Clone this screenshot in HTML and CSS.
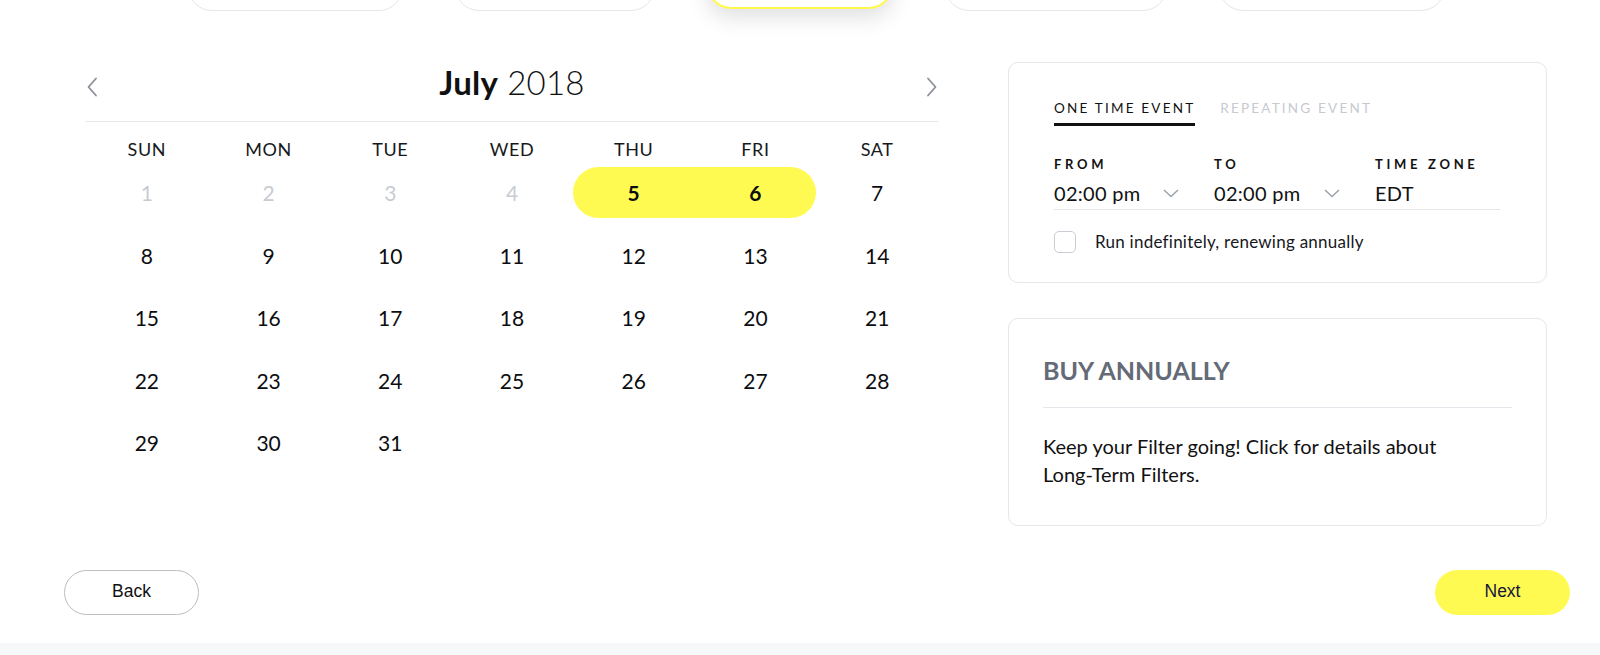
FILE: index.html
```html
<!DOCTYPE html>
<html lang="en">
<head>
<meta charset="utf-8">
<title>Schedule</title>
<link rel="stylesheet" href="styles.css">
</head>
<body>
<div class="page">
  <nav class="steps">
    <div class="step s1"></div>
    <div class="step s2"></div>
    <div class="step s3 active"></div>
    <div class="step s4"></div>
    <div class="step s5"></div>
  </nav>

  <main class="main">
    <section class="calendar">
      <header class="cal-head">
        <button class="nav-btn" aria-label="Previous month">
          <svg width="12" height="20" viewBox="0 0 12 20"><polyline points="10,1.5 2.5,10 10,18.5" fill="none" stroke="#8c9198" stroke-width="1.8" stroke-linecap="round" stroke-linejoin="round"/></svg>
        </button>
        <h2 class="cal-title"><b>July</b> 2018</h2>
        <button class="nav-btn" aria-label="Next month">
          <svg width="12" height="20" viewBox="0 0 12 20"><polyline points="2,1.5 9.5,10 2,18.5" fill="none" stroke="#8c9198" stroke-width="1.8" stroke-linecap="round" stroke-linejoin="round"/></svg>
        </button>
      </header>
      <div class="weekdays">
        <span>SUN</span><span>MON</span><span>TUE</span><span>WED</span><span>THU</span><span>FRI</span><span>SAT</span>
      </div>
      <div class="days">
        <span class="day past">1</span><span class="day past">2</span><span class="day past">3</span><span class="day past">4</span><span class="day sel start">5</span><span class="day sel end">6</span><span class="day">7</span>
        <span class="day">8</span><span class="day">9</span><span class="day">10</span><span class="day">11</span><span class="day">12</span><span class="day">13</span><span class="day">14</span>
        <span class="day">15</span><span class="day">16</span><span class="day">17</span><span class="day">18</span><span class="day">19</span><span class="day">20</span><span class="day">21</span>
        <span class="day">22</span><span class="day">23</span><span class="day">24</span><span class="day">25</span><span class="day">26</span><span class="day">27</span><span class="day">28</span>
        <span class="day">29</span><span class="day">30</span><span class="day">31</span>
      </div>
    </section>

    <aside class="side">
      <div class="card event-card">
        <div class="event-tabs">
          <span class="etab on">ONE TIME EVENT</span>
          <span class="etab">REPEATING EVENT</span>
        </div>
        <div class="fields">
          <div class="field">
            <label class="flabel">FROM</label>
            <div class="fvalue select"><span>02:00 pm</span>
              <svg width="16" height="9" viewBox="0 0 16 9"><polyline points="1,1 8,7.5 15,1" fill="none" stroke="#9aa0a8" stroke-width="1.4"/></svg>
            </div>
          </div>
          <div class="field">
            <label class="flabel">TO</label>
            <div class="fvalue select"><span>02:00 pm</span>
              <svg width="16" height="9" viewBox="0 0 16 9"><polyline points="1,1 8,7.5 15,1" fill="none" stroke="#9aa0a8" stroke-width="1.4"/></svg>
            </div>
          </div>
          <div class="field">
            <label class="flabel">TIME ZONE</label>
            <div class="fvalue">EDT</div>
          </div>
        </div>
        <label class="check">
          <span class="box"></span>
          <span class="check-text">Run indefinitely, renewing annually</span>
        </label>
      </div>

      <div class="card promo-card">
        <h3 class="promo-title">BUY ANNUALLY</h3>
        <p class="promo-text">Keep your Filter going! Click for details about <span class="nowrap">Long-Term</span> Filters.</p>
      </div>
    </aside>
  </main>

  <div class="actions">
    <button class="btn back">Back</button>
    <button class="btn next">Next</button>
  </div>
</div>
<footer class="foot"></footer>
</body>
</html>
```

FILE: styles.css
```css
* { box-sizing: border-box; }

html, body {
  margin: 0;
  padding: 0;
  background: #fff;
  font-family: "Lato", "Open Sans", sans-serif;
  color: #111318;
  overflow: hidden;
}

.page {
  height: 643px;
  display: flex;
  flex-direction: column;
}

/* top step tabs (cut off above viewport) */
.steps {
  display: flex;
  gap: 52px;
  padding-left: 188px;
  height: 11px;
}
.step {
  height: 50px;
  margin-top: -39px;
  border: 1px solid #e6e6e8;
  border-radius: 24px;
  background: #fff;
  flex: none;
}
.s1 { width: 215px; }
.s2 { width: 200px; }
.s3 { width: 186px; }
.s4 { width: 222px; }
.s5 { width: 226px; }
.step.active {
  border: 2px solid #fff94f;
  margin-top: -41px;
  box-shadow: 0 8px 22px rgba(0, 0, 0, 0.13);
}

.main {
  display: flex;
  padding: 51px 53px 0 86px;
  gap: 70px;
}

/* calendar */
.calendar {
  width: 852px;
  flex: none;
}
.cal-head {
  display: flex;
  align-items: center;
  justify-content: space-between;
  border-bottom: 1px solid #e3e6ea;
  padding-bottom: 19px;
}
.nav-btn {
  border: 0;
  background: none;
  padding: 0;
  width: 12px;
  height: 20px;
  margin-top: 10px;
  display: flex;
  cursor: pointer;
}
.cal-title {
  margin: 0;
  font-size: 33px;
  line-height: 40px;
  font-weight: 300;
  color: #111;
  letter-spacing: 0.2px;
}
.cal-title b { font-weight: 700; }

.weekdays {
  display: grid;
  grid-template-columns: repeat(7, 1fr);
  margin-top: 15px;
  text-align: center;
  font-size: 18px;
  line-height: 24px;
  letter-spacing: 0.6px;
  color: #16181c;
}
.days {
  display: grid;
  grid-template-columns: repeat(7, 1fr);
  grid-auto-rows: 51px;
  row-gap: 11.5px;
  margin-top: 6px;
}
.day {
  display: flex;
  align-items: center;
  justify-content: center;
  font-size: 21px;
  color: #0c0d10;
}
.day.past { color: #c8ccd2; }
.day.sel {
  background: #fffa52;
  font-weight: 700;
}
.day.start { border-radius: 26px 0 0 26px; }
.day.end { border-radius: 0 26px 26px 0; }

/* side column */
.side {
  width: 539px;
  flex: none;
  display: flex;
  flex-direction: column;
  gap: 35px;
}
.card {
  border: 1px solid #e4e6ea;
  border-radius: 10px;
  background: #fff;
}

.event-card {
  padding: 36px 45px 29px 45px;
}
.event-tabs {
  display: flex;
  gap: 25px;
}
.etab {
  font-size: 13.5px;
  line-height: 18px;
  letter-spacing: 2.2px;
  color: #c6cad0;
  padding-bottom: 6px;
  border-bottom: 3px solid transparent;
}
.etab.on {
  color: #111;
  border-bottom-color: #111;
}

.fields {
  display: grid;
  grid-template-columns: 160px 161px 125px;
  margin-top: 29px;
  border-bottom: 1px solid #e3e6ea;
  width: 446px;
}
.flabel {
  display: block;
  font-size: 13px;
  line-height: 18px;
  font-weight: 700;
  letter-spacing: 3.7px;
  color: #111;
}
.fvalue {
  margin-top: 7px;
  font-size: 20px;
  line-height: 26px;
  letter-spacing: 0.3px;
  padding-bottom: 3px;
  color: #111;
}
.select {
  display: flex;
  align-items: center;
  justify-content: space-between;
  padding-right: 35px;
}

.check {
  display: flex;
  align-items: center;
  gap: 19px;
  margin-top: 21px;
}
.box {
  width: 22px;
  height: 22px;
  border: 1px solid #c9cdd3;
  border-radius: 5px;
  flex: none;
}
.check-text {
  font-size: 17px;
  line-height: 20px;
  letter-spacing: 0.25px;
  color: #16181c;
}

.promo-card {
  padding: 36px 34px 37px 34px;
}
.promo-title {
  margin: 0;
  font-size: 25px;
  line-height: 30px;
  font-weight: 700;
  color: #646b76;
  padding-bottom: 22px;
  border-bottom: 1px solid #e3e6ea;
}
.promo-text {
  margin: 24px 0 0;
  font-size: 20px;
  line-height: 28px;
  color: #111;
}
.nowrap { white-space: nowrap; }

/* bottom actions */
.actions {
  margin-top: auto;
  margin-bottom: 28px;
  display: flex;
  justify-content: space-between;
  padding: 0 30px 0 64px;
}
.btn {
  width: 135px;
  height: 45px;
  border-radius: 23px;
  font-family: "Liberation Sans", Arial, sans-serif;
  font-size: 17.5px;
  padding: 0 0 3px;
  cursor: pointer;
}
.back {
  background: #fff;
  border: 1px solid #bdbdbd;
  color: #111;
}
.next {
  background: #fffa52;
  border: 0;
  color: #14163a;
}

.foot {
  height: 12px;
  background: #f7f8fa;
}
```
